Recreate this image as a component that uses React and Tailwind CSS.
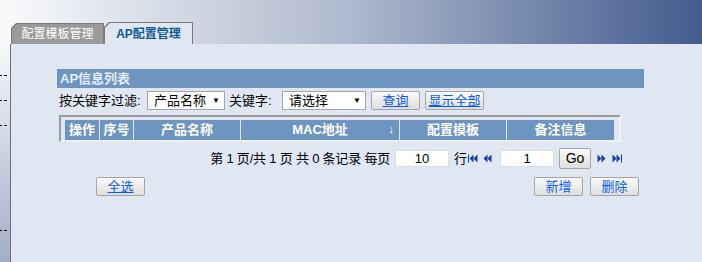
import React from "react";

const F = '"Liberation Sans","Noto Sans CJK SC",sans-serif';

function Tab({ w, h, fill, children, textCls }) {
  const clip = { clipPath: "polygon(5px 0, 100% 0, 100% 100%, 0 100%, 0 5px)" };
  return (
    <div className="relative bg-[#7a7a7a]" style={{ width: w, height: h, ...clip }}>
      <div
        className={`absolute left-[1px] right-[1px] top-[1px] bottom-0 flex items-center justify-center ${fill}`}
        style={clip}
      >
        <span className={textCls}>{children}</span>
      </div>
    </div>
  );
}

function Btn({ w, children, underline = true, className = "" }) {
  return (
    <div
      className={`flex h-[19px] items-center justify-center rounded-[2px] border border-[#a5a5a5] bg-gradient-to-b from-[#fbfbfb] to-[#dedede] text-[13px] text-[#0b5cf0] ${underline ? "underline underline-offset-[1px]" : ""} ${className}`}
      style={{ width: w }}
    >
      {children}
    </div>
  );
}

function Sel({ w, children }) {
  return (
    <div
      className="flex h-[19px] items-center justify-between border border-[#a5a5a5] bg-white pl-[6px] pr-[4px] text-[13px] text-black"
      style={{ width: w }}
    >
      <span>{children}</span>
      <span className="text-[8px] leading-none">▼</span>
    </div>
  );
}

function Arrow({ dir, bar }) {
  return (
    <svg width="10" height="9" viewBox="0 0 10 9" className="block">
      {dir === "left" ? (
        <g fill="#173c9a">
          {bar && <rect x="0" y="0.5" width="1" height="8" />}
          <polygon points={bar ? "1.5,4.5 5.5,0.5 5.5,8.5" : "0.5,4.5 4.5,0.5 4.5,8.5"} />
          <polygon points={bar ? "5.5,4.5 9.5,0.5 9.5,8.5" : "4.5,4.5 8.5,0.5 8.5,8.5"} />
        </g>
      ) : (
        <g fill="#173c9a">
          <polygon points="0.5,0.5 4.5,4.5 0.5,8.5" />
          <polygon points="4.5,0.5 8.5,4.5 4.5,8.5" />
          {bar && <rect x="9" y="0.5" width="1" height="8" />}
        </g>
      )}
    </svg>
  );
}

const cols = [
  ["操作", 35],
  ["序号", 34],
  ["产品名称", 107],
  ["MAC地址", 159],
  ["配置模板", 107],
  ["备注信息", 107],
];

export default function App() {
  return (
    <div
      className="relative flex h-[262px] w-[702px] flex-col overflow-hidden bg-[#e0e7f3]"
      style={{ fontFamily: F }}
    >
      {/* banner */}
      <div className="flex h-[44px] items-end bg-gradient-to-r from-[#f9fafc] via-[#aeb9cd] to-[#445b8d] pl-[11px]">
        <Tab w={93} h={21} fill="bg-[#9a9a9a]" textCls="text-[12px] text-white">
          配置模板管理
        </Tab>
        <Tab w={89} h={22} fill="bg-[#e0e7f3]" textCls="text-[12px] font-bold text-[#0e5894]">
          AP配置管理
        </Tab>
      </div>

      <div className="flex flex-1">
        {/* left strip */}
        <div className="relative w-[11px] border-r border-[#707070] bg-gradient-to-b from-[#f7f8fa] to-[#a2aec8]">
          {[31, 56, 81, 186].map((t) => (
            <div key={t} className="absolute left-0 flex gap-[2px]" style={{ top: t }}>
              <div className="h-[1px] w-[2px] bg-black" />
              <div className="h-[1px] w-[3px] bg-black" />
            </div>
          ))}
        </div>

        {/* main */}
        <div className="flex-1 pl-[46px] pt-[25px]">
          <div className="w-[587px]">
            <div className="flex h-[19px] items-center bg-[#6d95c0] pl-[3px] text-[13px] font-bold text-[#e4edf8]">
              AP信息列表
            </div>

            <div className="mt-[3px] flex h-[19px] items-center pl-[2px] text-[13px] text-black">
              <span className="w-[88px] whitespace-nowrap">按关键字过滤:</span>
              <Sel w={78}>产品名称</Sel>
              <span className="ml-[4px] w-[53px] whitespace-nowrap">关键字:</span>
              <Sel w={84}>请选择</Sel>
              <Btn w={49} className="ml-[5px]">查询</Btn>
              <Btn w={59} className="ml-[5px]">显示全部</Btn>
            </div>

            <div className="ml-[2px] mt-[5px] h-[27px] w-[562px] border-2 border-l-[#9a9a9a] border-t-[#9a9a9a] border-b-[#eef1f5] border-r-[#eef1f5] pl-[4px] pt-[3px]">
              <div className="flex h-[20px] w-[549px] bg-[#6d95c0]">
                {cols.map(([t, w], i) => (
                  <div
                    key={t}
                    className={`relative flex items-center justify-center text-[13px] font-bold text-white ${i < cols.length - 1 ? "border-r border-[#dfe7f1]" : ""}`}
                    style={{ width: w }}
                  >
                    {t}
                    {t === "MAC地址" && (
                      <span className="absolute right-[5px] top-[1px] text-[11px] font-normal">↓</span>
                    )}
                  </div>
                ))}
              </div>
            </div>

            <div className="mt-[6px] flex h-[21px] items-center justify-end pr-[22px] text-[13px] text-black">
              <span className="whitespace-pre tracking-[-0.2px]">第 1 页/共 1 页 共 0 条记录 每页</span>
              <div className="ml-[5px] flex h-[17px] w-[54px] items-center justify-center border border-[#d8dde6] bg-white text-[13px]">
                10
              </div>
              <span className="ml-[5px]">行</span>
              <div className="ml-[1px]"><Arrow dir="left" bar /></div>
              <div className="ml-[5px]"><Arrow dir="left" /></div>
              <div className="ml-[7px] flex h-[17px] w-[54px] items-center justify-center border border-[#d8dde6] bg-white text-[13px]">
                1
              </div>
              <div className="ml-[5px] flex h-[21px] w-[32px] items-center justify-center rounded-[2px] border border-[#a5a5a5] bg-gradient-to-b from-[#fbfbfb] to-[#dedede] text-[14px]">
                Go
              </div>
              <div className="ml-[6px]"><Arrow dir="right" /></div>
              <div className="ml-[5px]"><Arrow dir="right" bar /></div>
            </div>

            <div className="mt-[8px] flex items-center">
              <Btn w={49} className="ml-[39px]">全选</Btn>
              <Btn w={49} underline={false} className="ml-[389px]">新增</Btn>
              <Btn w={49} underline={false} className="ml-[7px]">删除</Btn>
            </div>
          </div>
        </div>
      </div>
    </div>
  );
}
